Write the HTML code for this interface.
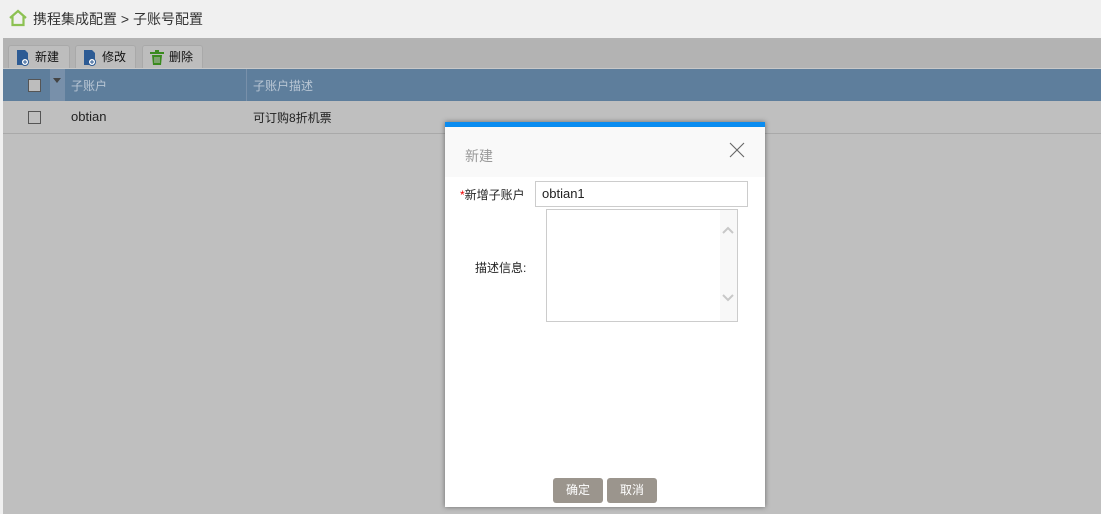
<!DOCTYPE html>
<html><head><meta charset="utf-8"><style>
*{margin:0;padding:0;box-sizing:border-box}
body{width:1101px;height:514px;overflow:hidden;background:#f0f0f0;font-family:"Liberation Sans","Noto Sans CJK SC",sans-serif;font-size:12px;color:#222;position:relative}
.abs{position:absolute}
.tab{position:absolute;top:45px;height:24px;background:#bdbdbd;border:1px solid #a9a9a9;border-bottom:none;border-radius:3px 3px 0 0;font-size:12px;line-height:23px;padding-left:26px;color:#111}
.tab svg{position:absolute;left:7px;top:4px}
</style></head><body>
<svg class="abs" style="left:8px;top:9px" width="20" height="18" viewBox="0 0 20 18"><path d="M2 9 L10 2 L18 9 M4.5 7.5 V16 H15.5 V7.5" fill="none" stroke="#8cc152" stroke-width="2.2"/></svg>
<div class="abs" style="left:33px;top:9px;font-size:14px;color:#333">携程集成配置 &gt; 子账号配置</div>
<div class="abs" style="left:3px;top:38px;width:1098px;height:476px;background:#bfbfbf"></div>
<div class="abs" style="left:3px;top:38px;width:1098px;height:30px;background:#b3b3b3"></div>
<div class="tab" style="left:8px;width:62px"><svg width="14" height="16" viewBox="0 0 14 16"><path d="M1 0H9L12 3V15H1Z" fill="#2d5b94"/><circle cx="9" cy="12" r="3.5" fill="#fff" stroke="#2d5b94"/><path d="M9 10v4M7 12h4" stroke="#2d5b94"/></svg>新建</div>
<div class="tab" style="left:75px;width:61px"><svg width="14" height="16" viewBox="0 0 14 16"><path d="M1 0H9L12 3V15H1Z" fill="#2d5b94"/><circle cx="9" cy="12" r="3.5" fill="#fff" stroke="#2d5b94"/><path d="M9 10v4M7 12h4" stroke="#2d5b94"/></svg>修改</div>
<div class="tab" style="left:142px;width:61px"><svg width="14" height="16" viewBox="0 0 14 16"><path d="M0 3h14M5 1h4" stroke="#3a8a1e" stroke-width="2"/><path d="M2 5h10l-1 10H3Z" fill="#3a8a1e"/><path d="M5 7v6M7 7v6M9 7v6" stroke="#bdbdbd"/></svg>删除</div>
<div class="abs" style="left:3px;top:68px;width:1098px;height:1px;background:#c8c8c8"></div>
<div class="abs" style="left:3px;top:69px;width:1098px;height:32px;background:#5e7e9c"></div>
<div class="abs" style="left:50px;top:69px;width:15px;height:32px;background:#7890aa"></div>
<div class="abs" style="left:246px;top:69px;width:1px;height:32px;background:#7890aa"></div>
<div class="abs" style="left:53px;top:78px;width:0;height:0;border-left:4px solid transparent;border-right:4px solid transparent;border-top:5px solid #444"></div>
<div class="abs" style="left:28px;top:79px;width:13px;height:13px;background:#bdbdbd;border:1px solid #555"></div>
<div class="abs" style="left:71px;top:77px;color:#b9c6d4">子账户</div>
<div class="abs" style="left:253px;top:77px;color:#b9c6d4">子账户描述</div>
<div class="abs" style="left:28px;top:111px;width:13px;height:13px;border:1px solid #555"></div>
<div class="abs" style="left:71px;top:109px;font-size:13px">obtian</div>
<div class="abs" style="left:253px;top:109px">可订购8折机票</div>
<div class="abs" style="left:3px;top:133px;width:1098px;height:1px;background:#a9a9a9"></div>
<div class="abs" style="left:445px;top:122px;width:320px;height:385px;background:#fff;box-shadow:0 0 5px rgba(0,0,0,.45)">
<div style="height:5px;background:#0a8cf0"></div>
<div style="height:50px;background:#f9f9f9;position:relative"><div class="abs" style="left:20px;top:19px;font-size:14px;color:#999">新建</div>
<svg class="abs" style="left:284px;top:15px" width="16" height="16"><path d="M1 1L15 15M15 1L1 15" stroke="#666" stroke-width="1.1"/></svg></div>
<div class="abs" style="left:15px;top:64px;font-size:12px"><span style="color:#e00">*</span>新增子账户</div>
<div class="abs" style="left:90px;top:59px;width:213px;height:26px;border:1px solid #ccc;padding-left:6px;line-height:24px;font-size:13px">obtian1</div>
<div class="abs" style="left:30px;top:137px">描述信息:</div>
<div class="abs" style="left:101px;top:87px;width:192px;height:113px;border:1px solid #ccc"><div class="abs" style="right:0;top:0;width:17px;height:111px;background:#f8f8f8"></div>
<svg class="abs" style="right:3px;top:16px" width="12" height="8"><path d="M1 7L6 2L11 7" fill="none" stroke="#c8c8c8" stroke-width="2"/></svg>
<svg class="abs" style="right:3px;top:84px" width="12" height="8"><path d="M1 1L6 6L11 1" fill="none" stroke="#c8c8c8" stroke-width="2"/></svg></div>
<div class="abs" style="left:108px;top:356px;width:50px;height:25px;background:#9b958d;border-radius:3px;color:#fff;text-align:center;line-height:25px">确定</div>
<div class="abs" style="left:162px;top:356px;width:50px;height:25px;background:#9b958d;border-radius:3px;color:#fff;text-align:center;line-height:25px">取消</div>
</div>
</body></html>
